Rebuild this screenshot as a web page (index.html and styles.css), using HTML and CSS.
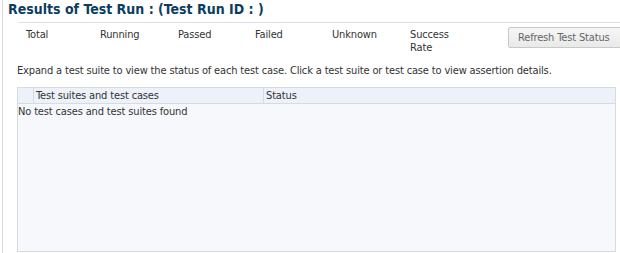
FILE: index.html
```html
<!DOCTYPE html>
<html lang="en">
<head>
    <meta charset="UTF-8">
    <title>Results of Test Run</title>
    <link rel="stylesheet" href="styles.css">
</head>
<body>
<div class="page">
    <h1 class="run-title">Results of Test Run : (Test Run ID : )</h1>

    <div class="run-summary">
        <div class="run-stats">
            <div class="run-stat">Total</div>
            <div class="run-stat">Running</div>
            <div class="run-stat">Passed</div>
            <div class="run-stat">Failed</div>
            <div class="run-stat">Unknown</div>
            <div class="run-stat">Success<br>Rate</div>
        </div>
        <button class="run-button" type="button">Refresh Test Status</button>
    </div>

    <p class="run-hint">Expand a test suite to view the status of each test case. Click a test suite or test case to view assertion details.</p>

    <div class="run-table">
        <div class="run-table-head">
            <div class="run-col run-col-icon"></div>
            <div class="run-col run-col-name">Test suites and test cases</div>
            <div class="run-col run-col-status">Status</div>
        </div>
        <div class="run-table-body">
            <div class="run-empty">No test cases and test suites found</div>
        </div>
    </div>
</div>
</body>
</html>
```

FILE: styles.css
```css
/* test run results panel */
:root {
    --frame-border: #d3dae4;
    --rule: #dde3ea;
    --title: #0b3e5e;
    --text: #333333;
    --table-border: #d6dbe2;
    --table-head: #edf1f9;
    --table-body: #f7f8fc;
}

* {
    box-sizing: border-box;
}

html, body {
    margin: 0;
    height: 100%;
    overflow: hidden;
    background: #ffffff;
}

body {
    font-family: "DejaVu Sans Condensed", "DejaVu Sans", sans-serif;
    font-size: 11px;
    letter-spacing: -0.15px;
    color: var(--text);
}

.page {
    margin-left: 2px;
    height: 253px;
    border-left: 1px solid var(--frame-border);
    padding-left: 5px;
    overflow: hidden;
}

.run-title {
    margin: 0;
    padding-top: 1px;
    height: 22px;
    font-size: 14px;
    font-weight: bold;
    letter-spacing: 0;
    line-height: 16px;
    color: var(--title);
}

.run-summary {
    display: flex;
    margin-left: 10px;
    border-top: 1px solid var(--rule);
    padding-top: 5px;
    height: 38px;
}

.run-stats {
    display: grid;
    grid-template-columns: 74px 78px 77px 77px 78px 98px;
    padding-left: 8px;
    line-height: 13px;
}

.run-button {
    flex: none;
    margin-top: -1px;
    width: 118px;
    height: 21px;
    padding: 0 0 0 9px;
    text-align: left;
    font: inherit;
    letter-spacing: inherit;
    color: #666666;
    background: linear-gradient(#f6f6f6, #e9e9e9);
    border: 1px solid #c8c8c8;
    border-radius: 2px;
}

.run-hint {
    margin: 4px 0 0 9px;
    line-height: 14px;
}

.run-table {
    margin: 9px 0 0 9px;
    width: 599px;
    height: 165px;
    border: 1px solid var(--table-border);
    background: var(--table-body);
    display: flex;
    flex-direction: column;
}

.run-table-head {
    display: flex;
    height: 16px;
    background: var(--table-head);
    border-bottom: 1px solid var(--table-border);
    line-height: 15px;
}

.run-col {
    border-right: 1px solid var(--table-border);
    padding-left: 2px;
}

.run-col-icon {
    width: 16px;
}

.run-col-name {
    width: 230px;
}

.run-col-status {
    flex: 1;
    border-right: none;
}

.run-table-body {
    flex: 1;
}

.run-empty {
    line-height: 14px;
    padding-top: 1px;
}
```
